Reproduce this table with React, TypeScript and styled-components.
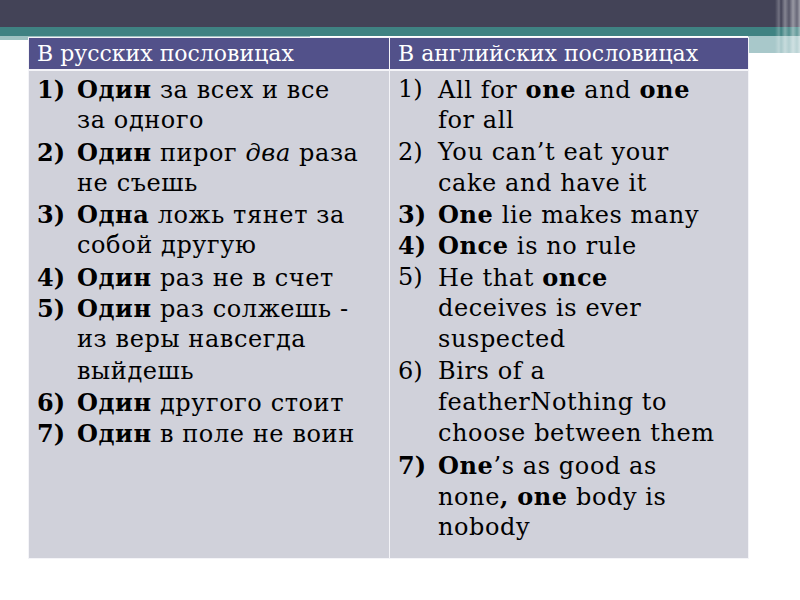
import React from 'react'
import styled, { createGlobalStyle } from 'styled-components'

const GlobalStyle = createGlobalStyle`
    html, body {
        margin: 0;
        padding: 0;
        background: #ffffff;
        font-family: "DejaVu Serif", serif;
    }
`

type Part = { t: string; b?: boolean; i?: boolean }
type Item = { num: string; boldNum: boolean; lines: Part[][] }

const russian: Item[] = [
    { num: '1)', boldNum: true, lines: [[{ t: 'Один', b: true }, { t: ' за всех и все' }], [{ t: 'за одного' }]] },
    { num: '2)', boldNum: true, lines: [[{ t: 'Один', b: true }, { t: ' пирог ' }, { t: 'два', i: true }, { t: ' раза' }], [{ t: 'не съешь' }]] },
    { num: '3)', boldNum: true, lines: [[{ t: 'Одна', b: true }, { t: ' ложь тянет за' }], [{ t: 'собой другую' }]] },
    { num: '4)', boldNum: true, lines: [[{ t: 'Один', b: true }, { t: ' раз не в счет' }]] },
    { num: '5)', boldNum: true, lines: [[{ t: 'Один', b: true }, { t: ' раз солжешь -' }], [{ t: 'из веры навсегда' }], [{ t: 'выйдешь' }]] },
    { num: '6)', boldNum: true, lines: [[{ t: 'Один', b: true }, { t: ' другого стоит' }]] },
    { num: '7)', boldNum: true, lines: [[{ t: 'Один', b: true }, { t: ' в поле не воин' }]] },
]

const english: Item[] = [
    { num: '1)', boldNum: false, lines: [[{ t: 'All for ' }, { t: 'one', b: true }, { t: ' and ' }, { t: 'one', b: true }], [{ t: 'for all' }]] },
    { num: '2)', boldNum: false, lines: [[{ t: 'You can’t eat your' }], [{ t: 'cake and have it' }]] },
    { num: '3)', boldNum: true, lines: [[{ t: 'One', b: true }, { t: ' lie makes many' }]] },
    { num: '4)', boldNum: true, lines: [[{ t: 'Once', b: true }, { t: ' is no rule' }]] },
    { num: '5)', boldNum: false, lines: [[{ t: 'He that ' }, { t: 'once', b: true }], [{ t: 'deceives is ever' }], [{ t: 'suspected' }]] },
    { num: '6)', boldNum: false, lines: [[{ t: 'Birs of a' }], [{ t: 'featherNothing to' }], [{ t: 'choose between them' }]] },
    { num: '7)', boldNum: true, lines: [[{ t: 'One', b: true }, { t: '’s as good as' }], [{ t: 'none' }, { t: ',', b: true }, { t: ' ' }, { t: 'one', b: true }, { t: ' body is' }], [{ t: 'nobody' }]] },
]

function Proverbs({ items }: { items: Item[] }) {
    return (
        <List>
            {items.map((item) => (
                <Row key={item.num}>
                    <Num $bold={item.boldNum}>{item.num}</Num>
                    <Text>
                        {item.lines.map((line, li) => (
                            <Line key={li}>
                                {line.map((p, pi) =>
                                    p.b ? <b key={pi}>{p.t}</b> : p.i ? <i key={pi}>{p.t}</i> : <span key={pi}>{p.t}</span>
                                )}
                            </Line>
                        ))}
                    </Text>
                </Row>
            ))}
        </List>
    )
}

export default function App() {
    return (
        <Slide>
            <GlobalStyle />
            <Table>
                <HeadCell>В русских пословицах</HeadCell>
                <HeadCell>В английских пословицах</HeadCell>
                <BodyCell>
                    <Proverbs items={russian} />
                </BodyCell>
                <BodyCell>
                    <Proverbs items={english} />
                </BodyCell>
            </Table>
        </Slide>
    )
}

const Slide = styled.div`
    width: 800px;
    height: 600px;
    overflow: hidden;
    box-sizing: border-box;
    padding: 37px 0 0 28px;
    background-color: #ffffff;
    background-repeat: no-repeat;
    background-image:
        linear-gradient(90deg, rgba(255,255,255,0) 0, rgba(255,255,255,0.25) 4px, rgba(255,255,255,0) 6px, rgba(255,255,255,0.35) 10px, rgba(255,255,255,0.1) 14px, rgba(255,255,255,0.45) 18px, rgba(255,255,255,0.2) 22px, rgba(255,255,255,0.5) 25px),
        linear-gradient(#434357, #434357),
        linear-gradient(#3f8282, #3f8282),
        linear-gradient(#a8c8ca, #a8c8ca),
        linear-gradient(#9fc2c2, #9fc2c2);
    background-size: 25px 53px, 100% 27px, 100% 9px, 52px 17px, 310px 4px;
    background-position: 775px 0, 0 0, 0 27px, 748px 36px, 0 36px;
`

const Table = styled.div`
    display: grid;
    grid-template-columns: 360px 358px;
    grid-template-rows: 31px 487px;
    gap: 2px 1px;
    width: 721px;
    padding: 1px;
    box-sizing: border-box;
    background: #f4f4f8;
`

const HeadCell = styled.div`
    background: #52518a;
    color: #ffffff;
    font-family: "DejaVu Serif", serif;
    font-size: 22px;
    display: flex;
    align-items: center;
    padding-left: 8px;
    white-space: nowrap;
`

const BodyCell = styled.div`
    background: #d0d1da;
    padding: 3px 0 0 8px;
    font-family: "DejaVu Serif", serif;
    font-size: 24px;
    line-height: 31.3px;
    letter-spacing: 0.6px;
    color: #000000;
`

const List = styled.div`
    display: flex;
    flex-direction: column;
`

const Row = styled.div`
    display: flex;
`

const Num = styled.span<{ $bold: boolean }>`
    width: 40px;
    height: 31.3px;
    flex: none;
    letter-spacing: 0;
    font-weight: ${(p) => (p.$bold ? 'bold' : 'normal')};
`

const Text = styled.div`
    display: flex;
    flex-direction: column;
`

const Line = styled.span`
    height: 31.3px;
    white-space: nowrap;
`
